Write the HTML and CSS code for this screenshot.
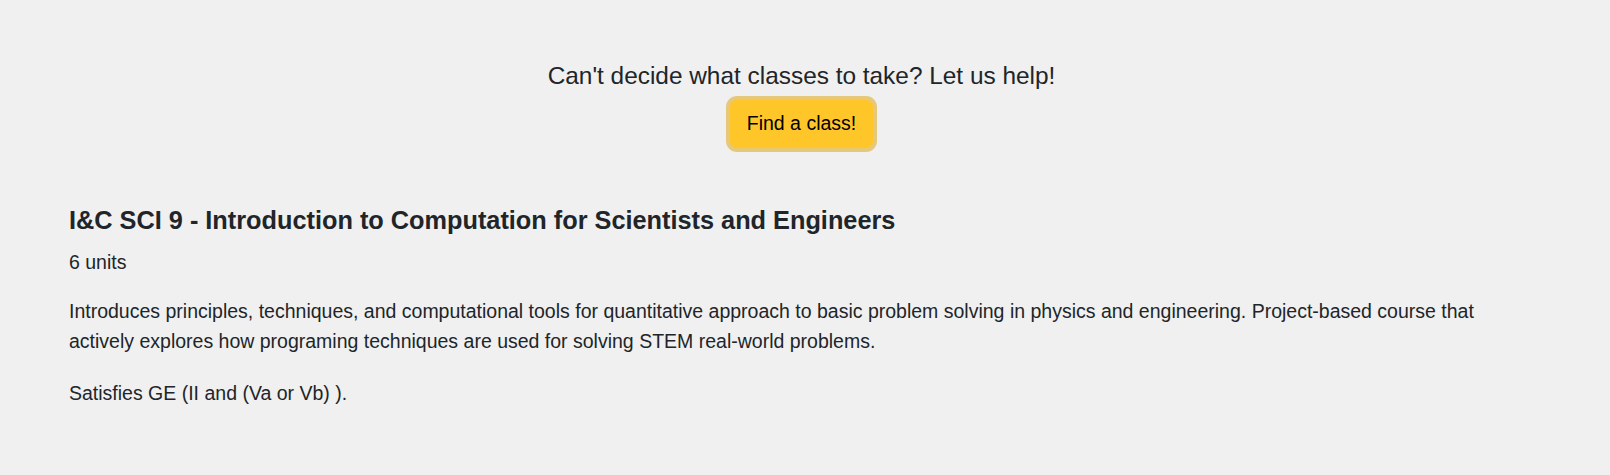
FILE: index.html
```html
<!DOCTYPE html>
<html lang="en">
<head>
<meta charset="utf-8">
<title>Find a class</title>
<link rel="stylesheet" href="styles.css">
</head>
<body>
<main class="page">
  <section class="cta">
    <h2 class="cta-title">Can't decide what classes to take? Let us help!</h2>
    <button class="btn-find" type="button">Find a class!</button>
  </section>
  <article class="course">
    <h3 class="course-title">I&amp;C SCI 9 - Introduction to Computation for Scientists and Engineers</h3>
    <p class="course-units">6 units</p>
    <p class="course-desc">Introduces principles, techniques, and computational tools for quantitative approach to basic problem solving in physics and engineering. Project-based course that actively explores how programing techniques are used for solving STEM real-world problems.</p>
    <p class="course-ge">Satisfies GE (II and (Va or Vb) ).</p>
  </article>
</main>
</body>
</html>
```
FILE: styles.css
```css
html, body {
  margin: 0;
  padding: 0;
  background: #f0f0f0;
}
body {
  font-family: "Liberation Sans", Arial, sans-serif;
  color: #212529;
}
.page {
  padding: 61px 76px 40px 69px;
}
.cta {
  display: flex;
  flex-direction: column;
  align-items: center;
  gap: 10px;
}
.cta-title {
  margin: 0;
  font-size: 24.4px;
  font-weight: 400;
  line-height: 1.2;
}
.btn-find {
  font-family: inherit;
  font-size: 19.5px;
  line-height: 1.5;
  color: #000;
  background: #ffc629;
  border: 1px solid #ffc629;
  border-radius: 7px;
  padding: 8px 16px;
  box-shadow: 0 0 0 4px #e6c878;
}
.course {
  margin-top: 57.5px;
}
.course-title {
  margin: 0 0 12px 0;
  font-size: 25.3px;
  font-weight: 700;
  line-height: 1.2;
}
.course p {
  margin: 0;
  font-size: 19.5px;
  line-height: 30px;
}
.course-units {
  margin-bottom: 19px !important;
}
.course-desc {
  margin-bottom: 22px !important;
}
```
